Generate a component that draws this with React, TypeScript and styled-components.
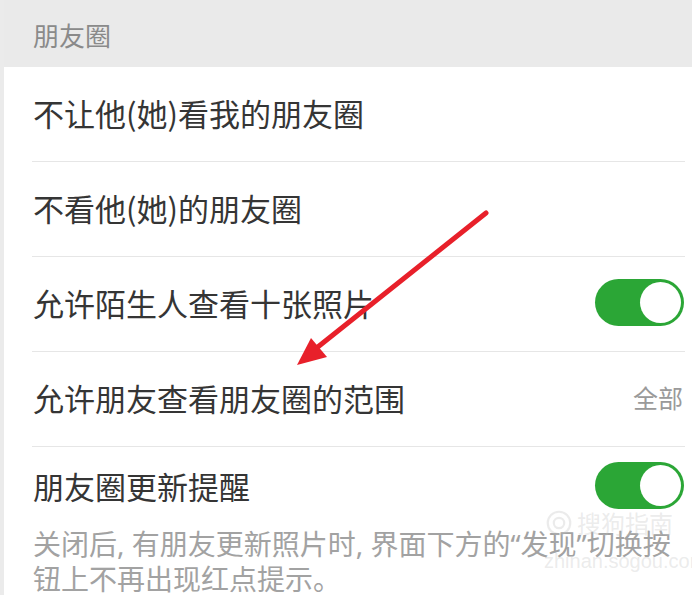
import React from "react";
import styled, { createGlobalStyle } from "styled-components";

const GlobalStyle = createGlobalStyle`
  html, body { margin: 0; padding: 0; background: #ffffff; }
  body { font-family: "Noto Sans CJK SC", "Noto Sans", sans-serif; }
`;

const Page = styled.div`
  position: relative;
  width: 692px;
  height: 595px;
  overflow: hidden;
  background: #ffffff;
  border-left: 4px solid #ebebeb;
  box-sizing: border-box;
`;

const SectionHeader = styled.div`
  height: 67px;
  display: flex;
  align-items: center;
  padding-top: 1px;
  box-sizing: border-box;
  background: #eaeaea;
  color: #8a8a8a;
  font-size: 26px;
  margin-left: -4px;
  padding-left: 33px;
`;

const List = styled.div`
  display: flex;
  flex-direction: column;
  padding-left: 28px;
  padding-right: 7px;
`;

const Row = styled.div<{ $last?: boolean }>`
  height: ${(p) => (p.$last ? "76px" : "90px")};
  padding-bottom: 4px;
  display: flex;
  align-items: center;
  justify-content: space-between;
  border-bottom: ${(p) => (p.$last ? "none" : "1px solid #e6e6e6")};
  padding-left: 1px;
  box-sizing: content-box;
`;

const Label = styled.span`
  font-size: 31px;
  color: #353535;
`;

const Value = styled.span`
  font-size: 25px;
  color: #9a9a9a;
  margin-right: 2px;
`;

const Track = styled.div`
  width: 89px;
  height: 47px;
  border-radius: 24px;
  background: #2ba636;
  display: flex;
  align-items: center;
  justify-content: flex-end;
  padding: 3px;
  box-sizing: border-box;
  margin-right: 1px;
`;

const Knob = styled.div`
  width: 41px;
  height: 41px;
  border-radius: 50%;
  background: #ffffff;
`;

const Note = styled.p`
  margin: 0;
  padding: 0 8px 0 29px;
  font-family: "Noto Sans", "Noto Sans CJK SC", sans-serif;
  font-size: 28px;
  line-height: 35px;
  color: #a2a2a2;
`;

const Watermark = styled.div`
  position: absolute;
  left: 542px;
  top: 508px;
  display: flex;
  flex-direction: column;
  align-items: flex-start;
  color: rgba(190, 190, 190, 0.3);
  pointer-events: none;
`;

const WatermarkTitle = styled.div`
  display: flex;
  align-items: center;
  gap: 5px;
  font-size: 24px;
  line-height: 30px;
`;

const WatermarkUrl = styled.div`
  font-family: "Liberation Sans", sans-serif;
  font-size: 20px;
  margin-top: 12px;
  margin-left: -2px;
`;

const ArrowLayer = styled.svg`
  position: absolute;
  left: 0;
  top: 0;
  pointer-events: none;
`;

const Toggle = () => (
  <Track>
    <Knob />
  </Track>
);

export default function App() {
  return (
    <>
      <GlobalStyle />
      <Page>
        <SectionHeader>朋友圈</SectionHeader>
        <List>
          <Row>
            <Label>不让他(她)看我的朋友圈</Label>
          </Row>
          <Row>
            <Label>不看他(她)的朋友圈</Label>
          </Row>
          <Row>
            <Label>允许陌生人查看十张照片</Label>
            <Toggle />
          </Row>
          <Row>
            <Label>允许朋友查看朋友圈的范围</Label>
            <Value>全部</Value>
          </Row>
          <Row $last>
            <Label>朋友圈更新提醒</Label>
            <Toggle />
          </Row>
        </List>
        <Note>
          关闭后, 有朋友更新照片时, 界面下方的“发现”切换按钮上不再出现红点提示。
        </Note>
        <Watermark>
          <WatermarkTitle>
            <svg width="26" height="26" viewBox="0 0 30 30">
              <circle cx="15" cy="15" r="13" fill="none" stroke="rgba(190,190,190,0.3)" strokeWidth="2.5" />
              <circle cx="15" cy="15" r="6" fill="none" stroke="rgba(190,190,190,0.3)" strokeWidth="2.5" />
            </svg>
            搜狗指南
          </WatermarkTitle>
          <WatermarkUrl>zhinan.sogou.com</WatermarkUrl>
        </Watermark>
        <ArrowLayer width="692" height="595" viewBox="0 0 692 595">
          <line x1="482" y1="213" x2="305" y2="354" stroke="#e8202a" strokeWidth="5" strokeLinecap="round" />
          <polygon points="293,365 307,338 323,357" fill="#e8202a" />
        </ArrowLayer>
      </Page>
    </>
  );
}
